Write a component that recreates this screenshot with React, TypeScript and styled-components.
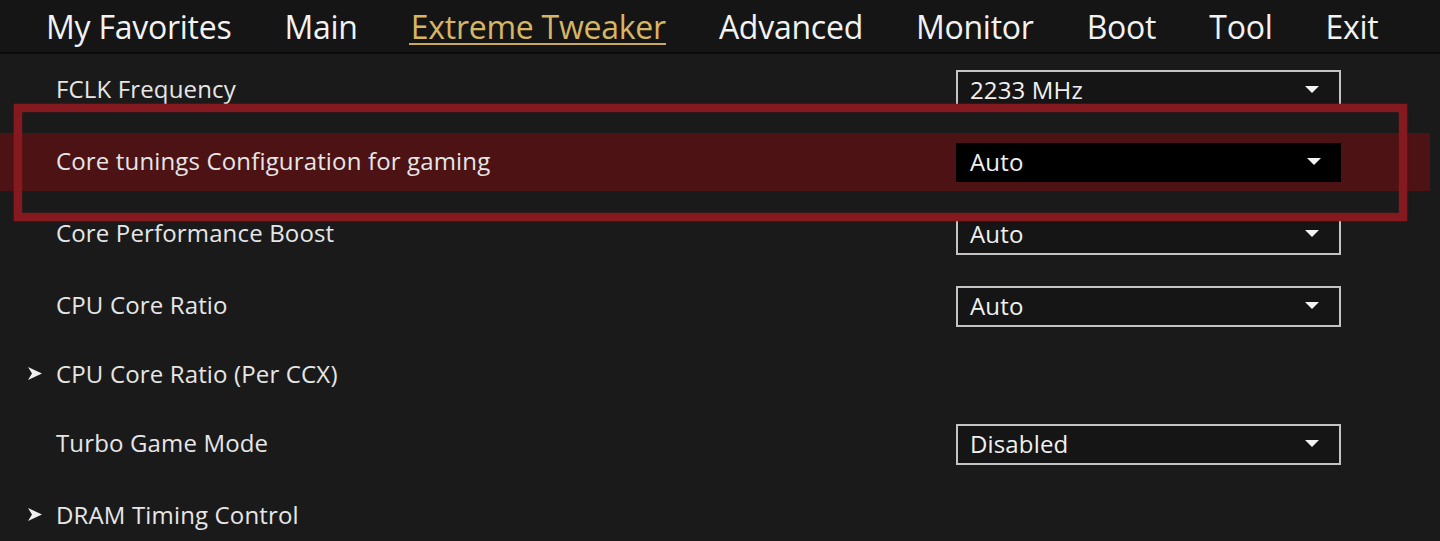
import React from "react";
import styled, { createGlobalStyle } from "styled-components";

const GlobalStyle = createGlobalStyle`
  html, body {
    margin: 0;
    padding: 0;
    background: #1a1a1a;
  }
  body {
    font-family: "Open Sans", "DejaVu Sans", sans-serif;
    color: #e8e8e8;
    overflow: hidden;
  }
`;

const Screen = styled.div`
  position: relative;
  width: 1440px;
  height: 541px;
  background: #1a1a1a;
  overflow: hidden;
`;

const NavBar = styled.nav`
  display: flex;
  align-items: flex-start;
  gap: 53px;
  height: 54px;
  padding-left: 46px;
  box-sizing: border-box;
  background: #151515;
  border-bottom: 2px solid #0a0a0a;
`;

const NavItem = styled.div<{ $active?: boolean }>`
  position: relative;
  font-size: 32px;
  letter-spacing: -0.25px;
  line-height: 54px;
  height: 50px;
  color: ${(p) => (p.$active ? "#d6b564" : "#f2f2f2")};
  white-space: nowrap;
  ${(p) =>
    p.$active &&
    `
    &::after {
      content: "";
      position: absolute;
      left: -2px;
      right: 0;
      bottom: 5px;
      height: 2px;
      background: #c9a85c;
    }
  `}
`;

const List = styled.div`
  display: flex;
  flex-direction: column;
`;

const Row = styled.div<{ $h: number }>`
  height: ${(p) => p.$h}px;
  padding: 7px 10px 7px 0;
  box-sizing: border-box;
`;

const RowBody = styled.div<{ $selected?: boolean }>`
  display: grid;
  grid-template-columns: 956px 385px;
  align-items: center;
  height: 100%;
  background: ${(p) => (p.$selected ? "#4d1214" : "transparent")};
`;

const Label = styled.div`
  display: flex;
  align-items: center;
  font-size: 24px;
  letter-spacing: 0.15px;
  color: #e6e6e6;
  margin-top: -3px;
`;

const ArrowSlot = styled.span`
  display: flex;
  align-items: center;
  justify-content: flex-end;
  width: 42px;
  margin-right: 14px;
  height: 14px;
`;

const Dropdown = styled.div<{ $active?: boolean }>`
  display: flex;
  align-items: center;
  justify-content: space-between;
  box-sizing: border-box;
  height: ${(p) => (p.$active ? 39 : 41)}px;
  padding: 0 20px 0 ${(p) => (p.$active ? 14 : 12)}px;
  background: ${(p) => (p.$active ? "#000" : "#151515")};
  border: ${(p) => (p.$active ? "none" : "2px solid #c4c4c4")};
  font-size: 24px;
  letter-spacing: 0.15px;
  color: #f0f0f0;
`;

const DropValue = styled.span`
  margin-top: -2px;
`;

const Highlight = styled.div`
  position: absolute;
  left: 14px;
  top: 104px;
  width: 1393px;
  height: 117px;
  box-sizing: border-box;
  border: 8px solid #841a1f;
  box-shadow: 0 0 2px rgba(132, 26, 31, 0.8), inset 0 0 2px rgba(132, 26, 31, 0.8);
  pointer-events: none;
`;

const Caret = () => (
  <svg width="14" height="8" viewBox="0 0 14 8">
    <polygon points="0,0 14,0 7,7" fill="#f4f4f4" />
  </svg>
);

const Chevron = () => (
  <svg width="14" height="13" viewBox="0 0 14 13">
    <polygon points="0,0 14,6.5 0,13 4,6.5" fill="#f0f0f0" />
  </svg>
);

type Item = {
  label: string;
  value?: string;
  submenu?: boolean;
  selected?: boolean;
  h: number;
};

const items: Item[] = [
  { label: "FCLK Frequency", value: "2233 MHz", h: 72 },
  { label: "Core tunings Configuration for gaming", value: "Auto", selected: true, h: 72 },
  { label: "Core Performance Boost", value: "Auto", h: 72 },
  { label: "CPU Core Ratio", value: "Auto", h: 72 },
  { label: "CPU Core Ratio (Per CCX)", submenu: true, h: 66 },
  { label: "Turbo Game Mode", value: "Disabled", h: 72 },
  { label: "DRAM Timing Control", submenu: true, h: 72 },
];

const tabs = ["My Favorites", "Main", "Extreme Tweaker", "Advanced", "Monitor", "Boot", "Tool", "Exit"];

export default function App() {
  return (
    <Screen>
      <GlobalStyle />
      <NavBar>
        {tabs.map((t) => (
          <NavItem key={t} $active={t === "Extreme Tweaker"}>
            {t}
          </NavItem>
        ))}
      </NavBar>
      <List>
        {items.map((it) => (
          <Row key={it.label} $h={it.h}>
            <RowBody $selected={it.selected}>
              <Label>
                <ArrowSlot>{it.submenu && <Chevron />}</ArrowSlot>
                {it.label}
              </Label>
              {it.value && (
                <Dropdown $active={it.selected}>
                  <DropValue>{it.value}</DropValue>
                  <Caret />
                </Dropdown>
              )}
            </RowBody>
          </Row>
        ))}
      </List>
      <Highlight />
    </Screen>
  );
}
